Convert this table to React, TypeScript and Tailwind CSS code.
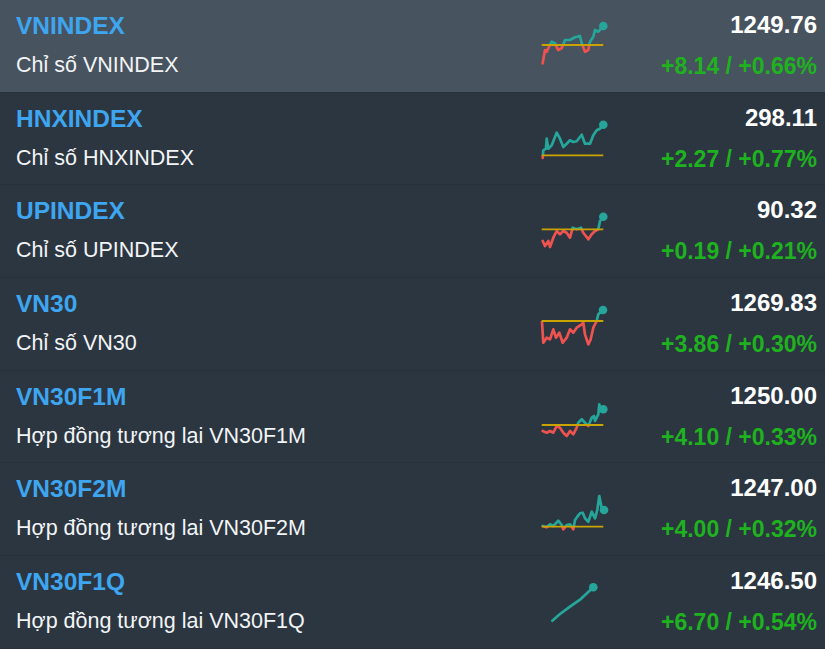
import React from 'react';

type Pt = [number, number];

type Row = {
    code: string;
    name: string;
    price: string;
    change: string;
    base: number | null;
    points: Pt[];
};

const rows: Row[] = [
    {
        code: 'VNINDEX',
        name: 'Chỉ số VNINDEX',
        price: '1249.76',
        change: '+8.14 / +0.66%',
        base: 45,
        points: [
            [542.7, 63.3], [545, 50], [546.7, 51.7], [549, 46.7], [551.7, 41.7], [555, 43.3], [558, 50],
            [561.7, 48.3], [565, 40], [570, 40], [575, 37.3], [580, 36], [581.7, 43.3], [585, 51.7],
            [588.3, 50], [590, 41.7], [593.3, 36.7], [595, 30], [598.3, 31.7], [603.3, 26],
        ],
    },
    {
        code: 'HNXINDEX',
        name: 'Chỉ số HNXINDEX',
        price: '298.11',
        change: '+2.27 / +0.77%',
        base: 62.3,
        points: [
            [542.7, 65], [543.3, 57.3], [546, 55.7], [546.7, 45.7], [548.3, 55.7], [551.7, 52.3],
            [556.7, 39.7], [560, 45.7], [563.3, 54], [566.7, 50.7], [570, 47.3], [573.3, 49], [576.7, 48.3],
            [581.7, 41.7], [585, 50.7], [590, 50.7], [593.3, 42.3], [596.7, 37.3], [600, 35.7], [603.3, 31.7],
        ],
    },
    {
        code: 'UPINDEX',
        name: 'Chỉ số UPINDEX',
        price: '90.32',
        change: '+0.19 / +0.21%',
        base: 44.3,
        points: [
            [542.7, 56], [545, 61], [548.3, 56], [550, 62], [553.3, 52.7], [556.7, 46], [560, 49.3],
            [563.3, 46], [566.7, 47.7], [570, 52.7], [572.7, 42.7], [576.7, 44.3], [581, 42.7], [583.3, 47.7],
            [588.3, 54.3], [591.7, 49.3], [595, 46], [598.3, 44.3], [600, 36], [603.3, 31.7],
        ],
    },
    {
        code: 'VN30',
        name: 'Chỉ số VN30',
        price: '1269.83',
        change: '+3.86 / +0.30%',
        base: 43,
        points: [
            [542, 44], [543.3, 64.7], [546.7, 59.7], [550, 61.3], [553.3, 51.3], [556, 59.7], [559.3, 54.7],
            [562.7, 64.7], [566.7, 59.7], [570, 51.3], [573.3, 54.7], [576.7, 49.7], [581.7, 46.3], [583.3, 44.7],
            [585, 56.3], [588.3, 66.3], [590.7, 61.3], [593.3, 49.7], [596.7, 43], [598.3, 36.3], [603, 32],
        ],
    },
    {
        code: 'VN30F1M',
        name: 'Hợp đồng tương lai VN30F1M',
        price: '1250.00',
        change: '+4.10 / +0.33%',
        base: 54,
        points: [
            [542.7, 60], [546.7, 61.7], [550, 60], [553.3, 61.7], [556.7, 55], [560, 56.7], [563.3, 61.7],
            [566.7, 65], [570, 60], [573.3, 63.3], [576.7, 56.7], [578.3, 51.7], [581.7, 48.3], [585, 51.7],
            [588.3, 55], [591.7, 46.7], [594, 45], [595, 50], [598.3, 43.3], [599.3, 33.3], [600.7, 40], [603.3, 38.3],
        ],
    },
    {
        code: 'VN30F2M',
        name: 'Hợp đồng tương lai VN30F2M',
        price: '1247.00',
        change: '+4.00 / +0.32%',
        base: 63.7,
        points: [
            [542.7, 63], [546.7, 64.3], [550, 61.3], [553.3, 63], [558.3, 57.7], [561.7, 62], [563.3, 66.3],
            [566.7, 62], [570, 61.3], [573.3, 66.3], [575, 57], [577.3, 53.7], [580, 50.3], [582.7, 49.7],
            [585, 55.3], [588.3, 58.7], [591.7, 48.7], [595, 55.3], [597.3, 47], [599.3, 33], [601.7, 45.3], [604, 47],
        ],
    },
    {
        code: 'VN30F1Q',
        name: 'Hợp đồng tương lai VN30F1Q',
        price: '1246.50',
        change: '+6.70 / +0.54%',
        base: null,
        points: [
            [552.3, 64.7], [560, 58], [570, 50.7], [580, 43.7], [593.3, 31.3],
        ],
    },
];

const Spark = ({ row, id }: { row: Row; id: number }) => {
    const d = row.points.map((p, i) => `${i ? 'L' : 'M'}${p[0]} ${p[1]}`).join(' ');
    const last = row.points[row.points.length - 1];
    const base = row.base ?? 200;
    return (
        <svg width="74" height="92" viewBox="536 0 74 92" className="block">
            <defs>
                <clipPath id={`up${id}`}>
                    <rect x="536" y="0" width="74" height={base} />
                </clipPath>
                <clipPath id={`dn${id}`}>
                    <rect x="536" y={base} width="74" height="92" />
                </clipPath>
            </defs>
            <path d={d} fill="none" stroke="#26a69a" strokeWidth="2.7" strokeLinejoin="round" strokeLinecap="round" clipPath={`url(#up${id})`} />
            <path d={d} fill="none" stroke="#ef5350" strokeWidth="2.7" strokeLinejoin="round" strokeLinecap="round" clipPath={`url(#dn${id})`} />
            {row.base !== null && <line x1="541.7" x2="603.3" y1={row.base} y2={row.base} stroke="#c9a400" strokeWidth="1.8" />}
            <circle cx={last[0]} cy={last[1]} r="4.3" fill="#26a69a" />
        </svg>
    );
};

export default function App() {
    return (
        <div className="w-[825px] h-[649px] overflow-hidden bg-[#2a3540] font-['Liberation_Sans',Arial,sans-serif]">
            {rows.map((row, i) => (
                <div
                    key={row.code}
                    className={`h-[92.7px] grid grid-cols-[1fr_74px_207px] pl-4 pr-2 border-b border-[#27313b] ${i === 0 ? 'bg-[#47535e]' : 'bg-[#2b3641]'}`}
                >
                    <div className="pt-[11px]">
                        <div className="text-[24.5px] leading-[29px] font-bold text-[#3ea6f0]">{row.code}</div>
                        <div className="mt-[12px] text-[21.5px] leading-[26px] text-[#f2f4f6]">{row.name}</div>
                    </div>
                    <Spark row={row} id={i} />
                    <div className="pt-[11px] text-right">
                        <div className="text-[24px] leading-[28px] font-bold text-white">{row.price}</div>
                        <div className="mt-[13px] text-[23px] leading-[28px] font-bold text-[#1fb21f]">{row.change}</div>
                    </div>
                </div>
            ))}
        </div>
    );
}
